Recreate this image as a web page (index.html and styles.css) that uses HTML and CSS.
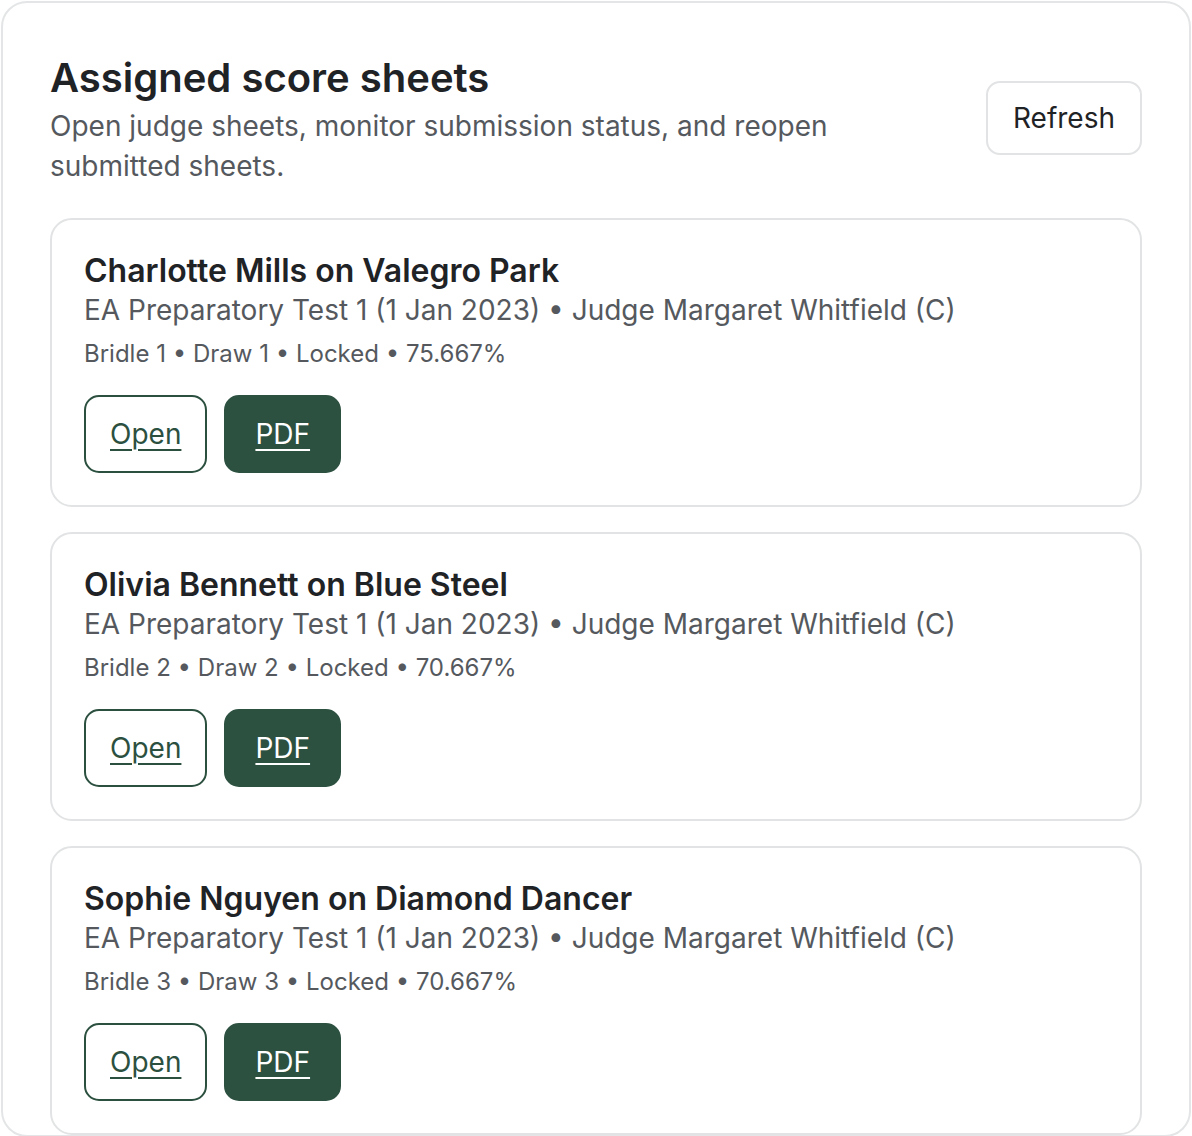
FILE: index.html
```html
<!DOCTYPE html>
<html lang="en">
<head>
<meta charset="utf-8">
<title>Assigned score sheets</title>
<link rel="stylesheet" href="styles.css">
</head>
<body>
<section class="panel">
  <header class="panel-head">
    <div class="head-text">
      <h1 class="title">Assigned score sheets</h1>
      <p class="subtitle">Open judge sheets, monitor submission status, and reopen submitted sheets.</p>
    </div>
    <button class="btn-refresh" type="button">Refresh</button>
  </header>
  <div class="list">
    <article class="sheet">
      <h2 class="sheet-name">Charlotte Mills on Valegro Park</h2>
      <p class="sheet-test">EA Preparatory Test 1 (1 Jan 2023) • Judge Margaret Whitfield (C)</p>
      <p class="sheet-meta">Bridle 1 • Draw 1 • Locked • 75.667%</p>
      <div class="actions">
        <a class="btn btn-outline" href="#">Open</a>
        <a class="btn btn-solid" href="#">PDF</a>
      </div>
    </article>
    <article class="sheet">
      <h2 class="sheet-name">Olivia Bennett on Blue Steel</h2>
      <p class="sheet-test">EA Preparatory Test 1 (1 Jan 2023) • Judge Margaret Whitfield (C)</p>
      <p class="sheet-meta">Bridle 2 • Draw 2 • Locked • 70.667%</p>
      <div class="actions">
        <a class="btn btn-outline" href="#">Open</a>
        <a class="btn btn-solid" href="#">PDF</a>
      </div>
    </article>
    <article class="sheet">
      <h2 class="sheet-name">Sophie Nguyen on Diamond Dancer</h2>
      <p class="sheet-test">EA Preparatory Test 1 (1 Jan 2023) • Judge Margaret Whitfield (C)</p>
      <p class="sheet-meta">Bridle 3 • Draw 3 • Locked • 70.667%</p>
      <div class="actions">
        <a class="btn btn-outline" href="#">Open</a>
        <a class="btn btn-solid" href="#">PDF</a>
      </div>
    </article>
  </div>
</section>
</body>
</html>
```

FILE: styles.css
```css
* { box-sizing: border-box; }
html, body { margin: 0; padding: 0; background: #ffffff; }
body {
  font-family: Inter, "Liberation Sans", sans-serif;
  color: #1f2326;
  overflow: hidden;
  height: 1136px;
}
.panel {
  width: 1190px;
  margin: 1px 0 0 1px;
  border: 2px solid #e4e5e6;
  border-radius: 26px;
  padding: 47px 47px 0 47px;
  background: #fff;
}
.panel-head {
  display: flex;
  justify-content: space-between;
  align-items: flex-start;
  gap: 40px;
}
.head-text { max-width: 800px; }
.title {
  margin: 0;
  font-size: 40px;
  line-height: 56px;
  font-weight: 600;
  color: #1f2326;
}
.subtitle {
  margin: 0;
  font-size: 28px;
  line-height: 40px;
  color: #55595e;
}
.btn-refresh {
  margin-top: 31px;
  height: 74px;
  padding: 0 25px;
  font-family: inherit;
  font-size: 28px;
  color: #1f2326;
  background: #fff;
  border: 2px solid #e2e3e4;
  border-radius: 14px;
}
.list {
  margin-top: 32px;
  display: flex;
  flex-direction: column;
  gap: 25px;
}
.sheet {
  border: 2px solid #e2e3e4;
  border-radius: 22px;
  padding: 31px 32px 32px 32px;
}
.sheet-name {
  margin: 0;
  font-size: 32px;
  line-height: 40px;
  font-weight: 600;
  color: #1f2326;
}
.sheet-test {
  margin: 0;
  font-size: 28px;
  line-height: 38px;
  color: #55595e;
}
.sheet-meta {
  margin: 8px 0 0 0;
  font-size: 24px;
  line-height: 34px;
  color: #55595e;
}
.actions {
  display: flex;
  gap: 17px;
  margin-top: 24px;
}
.btn {
  display: inline-flex;
  align-items: center;
  justify-content: center;
  height: 78px;
  padding: 0 24px;
  border-radius: 15px;
  font-size: 28px;
  text-decoration: underline;
  text-underline-offset: 5px;
  text-decoration-thickness: 2px;
}
.btn-outline {
  color: #2c5040;
  border: 2px solid #2c5040;
  background: #fff;
}
.btn-solid {
  color: #ffffff;
  background: #2d5141;
  border: 2px solid #2d5141;
  padding: 0 29px;
}
```
